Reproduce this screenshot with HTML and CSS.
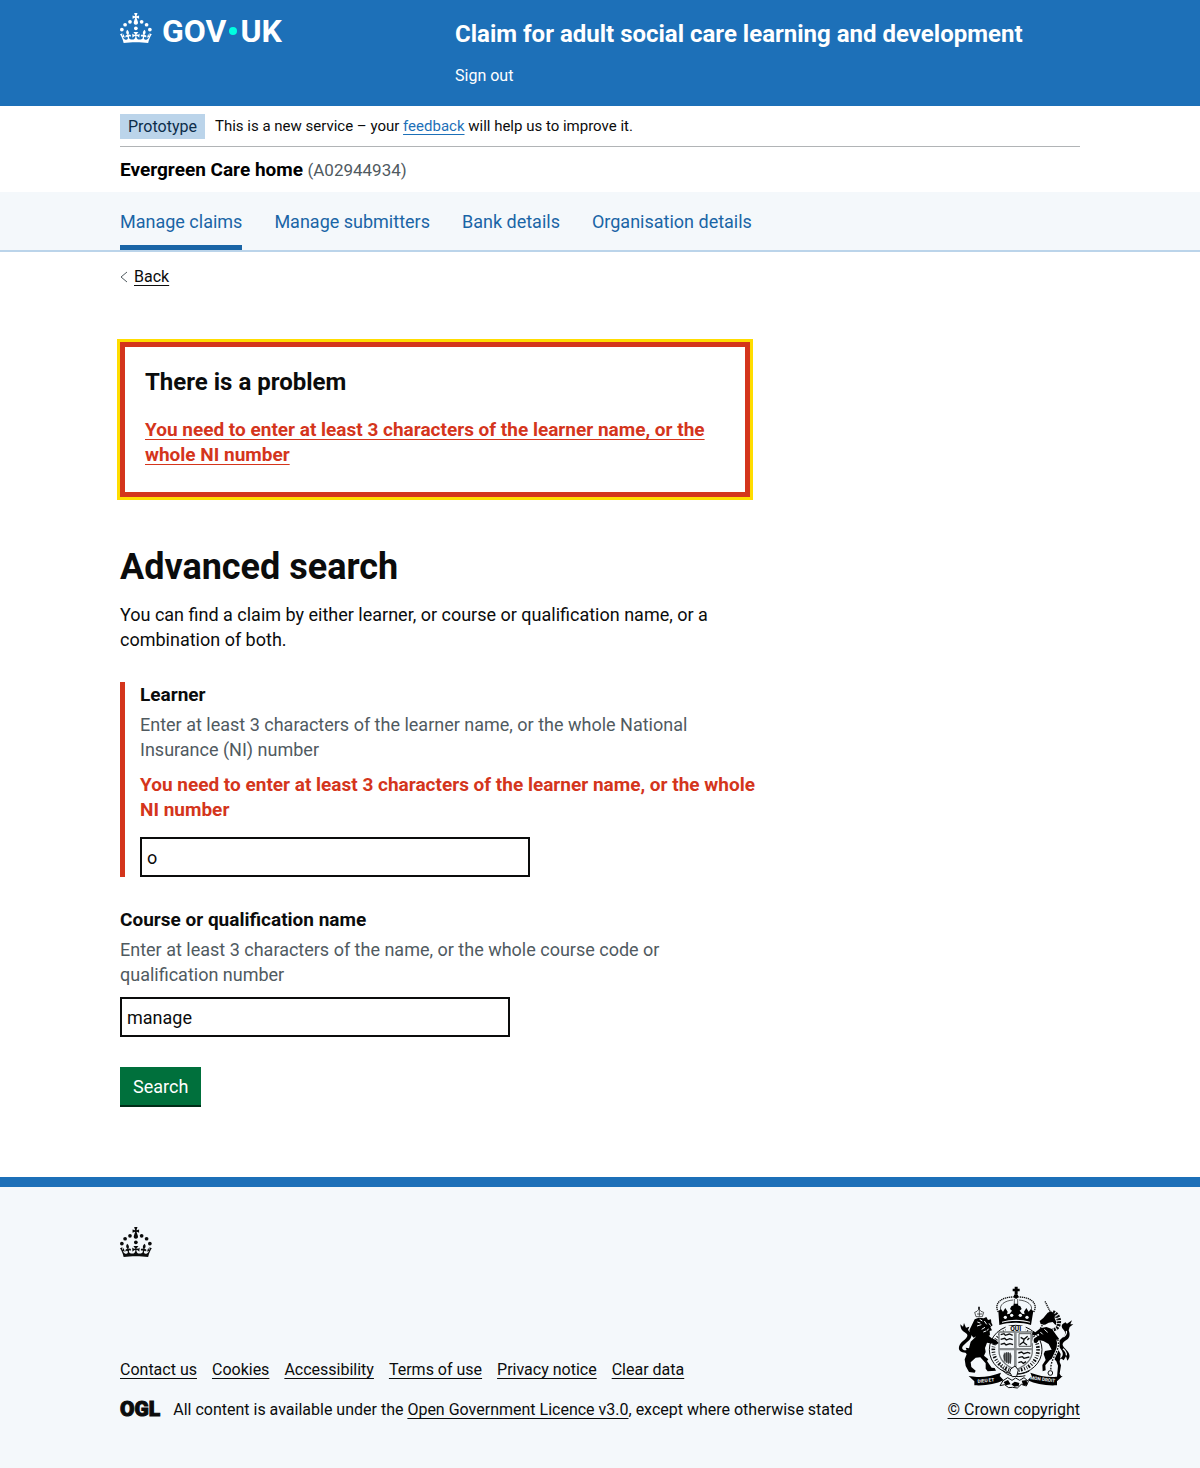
FILE: index.html
```html
<!DOCTYPE html>
<html lang="en">
<head>
<meta charset="utf-8">
<meta name="viewport" content="width=device-width, initial-scale=1">
<title>Advanced search – Claim for adult social care learning and development</title>
<link rel="stylesheet" href="styles.css">
</head>
<body>
<svg class="symbols" aria-hidden="true">
  <symbol id="crown" viewBox="0 0 64 60">
    <circle cx="20" cy="17.6" r="3.7"/><circle cx="10.2" cy="23.5" r="3.7"/><circle cx="3.7" cy="33.2" r="3.7"/><circle cx="31.7" cy="30.6" r="3.7"/><circle cx="43.3" cy="17.6" r="3.7"/><circle cx="53.2" cy="23.5" r="3.7"/><circle cx="59.7" cy="33.2" r="3.7"/>
    <path d="M33.1,9.8c.2-.1.3-.3.5-.5l4.6,2.4v-6.8l-4.6,1.5c-.1-.2-.3-.3-.5-.5l1.9-5.9h-6.7l1.9,5.9c-.2.1-.3.3-.5.5l-4.6-1.5v6.8l4.6-2.4c.1.2.3.3.5.5l-2.6,8c-.9,2.8,1.2,5.7,4.1,5.7h0c3,0,5.1-2.9,4.1-5.7l-2.6-8ZM37,37.9s-3.4,3.8-4.1,6.1c2.2,0,4.2-.5,6.4-2.8l-.7,8.5c-2-2.8-4.4-4.1-5.7-3.8.1,3.1.5,6.7,5.8,7.2,3.7.3,6.7-1.5,7-3.8.4-2.6-2-4.3-3.7-1.6-1.4-4.5,2.4-6.1,4.9-3.2-1.9-4.5-1.8-7.7,2.4-10.9,3,4,2.6,7.3-1.2,11.1,2.4-1.3,6.2,0,4,4.6-1.2-2.8-3.7-2.2-4.2.2-.3,1.7.7,3.7,3,4.2,1.9.3,4.7-.9,7-5.9-1.3,0-2.4.7-3.9,1.7l2.4-8c.6,2.3,1.4,3.7,2.2,4.5.6-1.6.5-2.8,0-5.3l5,1.8c-2.6,3.6-5.2,8.7-7.3,17.5-7.4-1.1-15.7-1.7-24.5-1.7h0c-8.8,0-17.1.6-24.5,1.7-2.1-8.9-4.7-13.9-7.3-17.5l5-1.8c-.5,2.5-.6,3.7,0,5.3.8-.8,1.6-2.3,2.2-4.5l2.4,8c-1.5-1-2.6-1.7-3.9-1.7,2.3,5,5.2,6.2,7,5.9,2.3-.4,3.3-2.4,3-4.2-.5-2.4-3-3.1-4.2-.2-2.2-4.6,1.6-6,4-4.6-3.7-3.7-4.2-7.1-1.2-11.1,4.2,3.2,4.3,6.4,2.4,10.9,2.5-2.8,6.3-1.3,4.9,3.2-1.8-2.7-4.1-1-3.7,1.6.3,2.3,3.3,4.1,7,3.8,5.4-.5,5.7-4.2,5.8-7.2-1.3-.2-3.7,1-5.7,3.8l-.7-8.5c2.2,2.3,4.2,2.7,6.4,2.8-.7-2.3-4.1-6.1-4.1-6.1h10.6Z"/>
  </symbol>
</svg>

<header class="header">
  <div class="container header-grid">
    <a class="logo" href="#" aria-label="GOV.UK">
      <svg class="crown" aria-hidden="true"><use href="#crown"/></svg>
      <span class="logo-text">GOV</span><span class="logo-dot"></span><span class="logo-text">UK</span>
    </a>
    <div class="header-content">
      <a class="service-name" href="#">Claim for adult social care learning and development</a>
      <a class="sign-out" href="#">Sign out</a>
    </div>
  </div>
</header>

<div class="container">
  <div class="phase-banner">
    <strong class="tag">Prototype</strong>
    <span class="phase-text">This is a new service – your <a class="link" href="#">feedback</a> will help us to improve it.</span>
  </div>
  <p class="organisation"><strong>Evergreen Care home</strong> <span>(A02944934)</span></p>
</div>

<nav class="service-nav" aria-label="Service">
  <ul class="container nav-list">
    <li><a class="nav-link current" href="#" aria-current="page">Manage claims</a></li>
    <li><a class="nav-link" href="#">Manage submitters</a></li>
    <li><a class="nav-link" href="#">Bank details</a></li>
    <li><a class="nav-link" href="#">Organisation details</a></li>
  </ul>
</nav>

<div class="container">
  <a class="back-link" href="#">
    <svg class="chevron" viewBox="0 0 8 12" aria-hidden="true"><path d="M7 1 1 6l6 5" fill="none" stroke="#505a5f"/></svg>
    <span>Back</span>
  </a>
  <main class="main">
    <div class="error-summary" role="alert">
      <h2>There is a problem</h2>
      <ul>
        <li><a href="#learner">You need to enter at least 3 characters of the learner name, or the whole NI number</a></li>
      </ul>
    </div>
    <h1>Advanced search</h1>
    <p class="lead">You can find a claim by either learner, or course or qualification name, or a combination of both.</p>
    <form>
      <div class="form-group form-group-error">
        <label for="learner">Learner</label>
        <p class="hint" id="learner-hint">Enter at least 3 characters of the learner name, or the whole National Insurance (NI) number</p>
        <p class="error-message" id="learner-error">You need to enter at least 3 characters of the learner name, or the whole NI number</p>
        <input class="input" id="learner" name="learner" type="text" value="o" aria-describedby="learner-hint learner-error">
      </div>
      <div class="form-group">
        <label for="course">Course or qualification name</label>
        <p class="hint" id="course-hint">Enter at least 3 characters of the name, or the whole course code or qualification number</p>
        <input class="input" id="course" name="course" type="text" value="manage" aria-describedby="course-hint">
      </div>
      <button class="button" type="submit">Search</button>
    </form>
  </main>
</div>

<footer class="footer">
  <div class="container">
    <svg class="crown" aria-hidden="true"><use href="#crown"/></svg>
    <div class="footer-meta">
      <div class="footer-main">
        <ul class="footer-links">
          <li><a href="#">Contact us</a></li>
          <li><a href="#">Cookies</a></li>
          <li><a href="#">Accessibility</a></li>
          <li><a href="#">Terms of use</a></li>
          <li><a href="#">Privacy notice</a></li>
          <li><a href="#">Clear data</a></li>
        </ul>
        <div class="licence">
          <span class="ogl" aria-hidden="true">OGL</span>
          <span>All content is available under the <a href="#">Open Government Licence v3.0</a>, except where otherwise stated</span>
        </div>
      </div>
      <a class="copyright" href="#">
        <svg class="arms" viewBox="50 30 351 309" aria-hidden="true">
          <!-- royal crown -->
          <path d="M223 32h9v6h6v8h-6v8h-9v-8h-6v-8h6z"/>
          <circle cx="227" cy="61" r="7"/>
          <g fill="none" stroke="#0b0c0c">
            <path d="M174 108c-16-28 14-46 46-45M280 108c16-28-14-46-46-45" stroke-width="4" stroke-dasharray="4 2"/>
            <path d="M182 106c-8-20 12-32 36-34M272 106c8-20-12-32-36-34" stroke-width="2"/>
            <path d="M222 70v24M232 70v24" stroke-width="3" stroke-dasharray="4 2"/>
          </g>
          <path d="M174 105l8-5 6 7 7-11 7 11-2 8 8-2 7-9-6-5 4-8 7-3v-5h13v5l7 3 4 8-6 5 7 9 8 2-2-8 7-11 7 11 6-7 8 5-7 42c-28-9-67-9-95 0z"/>
          <g fill="#f4f8fb"><circle cx="195" cy="124" r="5"/><circle cx="214" cy="118" r="5"/><circle cx="240" cy="118" r="5"/><circle cx="260" cy="124" r="5"/><path d="M185 137c24-8 60-8 84 0v3c-26-7-60-7-84 0z"/></g>
          <!-- garter -->
          <ellipse cx="226" cy="221" rx="79" ry="73" fill="#f4f8fb" stroke="#0b0c0c" stroke-width="3"/>
          <ellipse cx="226" cy="221" rx="67" ry="62" fill="none" stroke="#0b0c0c" stroke-width="11" stroke-dasharray="3 5 5 4 2 5"/>
          <path d="M196 150h60v18h-60z" fill="#f4f8fb"/>
          <text x="226" y="166" text-anchor="middle" class="arms-text">QUI</text>
          <!-- quartered shield -->
          <path d="M176 168h100v57c0 28-22 45-50 57-28-12-50-29-50-57z" fill="#f4f8fb" stroke="#75797b" stroke-width="4"/>
          <path d="M221 168h8v110h-8zM176 216h100v7H176z" fill="#8b8f91"/>
          <g fill="none" stroke="#0b0c0c" stroke-width="4">
            <path d="M181 176l10-3 4 5 12-4 10 4M181 190l12-3 5 5 10-4 9 3M181 205l11-3 5 5 12-4 9 3"/>
            <path d="M234 231l10-3 6 5 12-4 8 3M234 245l12-3 5 5 16-4M234 260l9-3 6 5 8-5"/>
            <path d="M241 184l10 6 11-9M252 188l-3 11 11 8M249 198l-11 8M261 192l6-6"/>
            <path d="M236 173h36v38h-36z" stroke-width="2"/>
          </g>
          <path d="M188 238c5-12 24-12 26 2l-2 20c-16 5-23-8-24-22z" fill="#75797b"/>
          <path d="M192 230v27M198 228v33M204 228v36M210 230v34" stroke="#0b0c0c" stroke-width="2"/>
          <!-- lion -->
          <path d="M107 122l-4-13 7-3 6-7 6 7 8 3-4 13zM110 114h16M117 101v20" fill="none" stroke="#0b0c0c" stroke-width="2"/>
          <path d="M116 92v8" stroke="#0b0c0c" stroke-width="5"/>
          <path d="M103 130l12-5 15 2 8-4 5 9 9-2 1 10 4 8-7 5 5 10-7 2 1 13-4 1 9 8 13 5 8 9-7 5-11-3-17-3-6 16 2 12-5 11 13 11-4 5 14 20 9 1 4 8-25 2-6-8 0-16-16-18-14 1-15 14 2 14 13 11-3 6-17-2-10-18-3-20 6-15-5-8 6-2-4-10 10 2 5-20 17-16-8 4-7-7-8-1 4-8-2-6z"/>
          <path d="M111 138l9 3M110 150l13-4M132 135l7 10M124 160l10-6M139 164l6-5M118 130l8 5M146 142l5 7M129 168l8-3" stroke="#f4f8fb" stroke-width="3"/>
          <path d="M79 230c-31 2-27-22-12-34 13-10 20-19 8-26-12-6-14-13-15-25l8 7 3-11 6 14 10-3-4 10c15 12 12 23 0 34-13 12-23 19-14 25 4 4 11 1 17-3"/>
          <!-- unicorn -->
          <path d="M314 76l16 32" fill="none" stroke="#0b0c0c" stroke-width="4" stroke-dasharray="4 2"/>
          <path d="M322 110l10-4 12 8-1 13 5 11-2 10-9-10-12 2-11 6-13-2-3-9 11-9z"/>
          <path d="M338 107c17 7 24 28 16 44-4 7-11 10-18 10" fill="none" stroke="#0b0c0c" stroke-width="10" stroke-dasharray="6 3"/>
          <path d="M340 116c10 7 14 21 10 33M312 141c-8 7-9 13-13 18" fill="none" stroke="#0b0c0c" stroke-width="4" stroke-dasharray="5 3"/>
          <path d="M285 169l15-12 18-4 17 6 10 14 11 15 2 17-5 15 8 14-3 24 4 10-4 25 6 10h-14l3-34-5-13-9-9-10 4-14 17 1 15-9 3-1-19 10-15-6-18 4-9 20-4-9-17-16-9-13-3-8 10-8-3 2-12 15-9-2-5-13 6-7-4 4-10z"/>
          <path d="M280 184l-4 16 8 6M312 160l10 9M300 168l7 7" fill="none" stroke="#f4f8fb" stroke-width="3"/>
          <path d="M354 252c16-9 17-21 7-33-9-12-8-24 5-34 16-12 6-21 0-28-4-8-1-14 7-16l1-3 6 5 15-10-5 12 9 0-11 8-3 10c6 14 2 25-8 30-13 8-13 15-2 25 14 14 17 24 6 36l-4-13-7 12-6-5z"/>
          <path d="M378 165c2 8-2 13-9 18M368 218c8 7 11 14 10 20" fill="none" stroke="#f4f8fb" stroke-width="4"/>
          <path d="M352 190c12 34-25 56-20 94" fill="none" stroke="#f4f8fb" stroke-width="8"/>
          <path d="M352 190c12 34-25 56-20 94" fill="none" stroke="#0b0c0c" stroke-width="4" stroke-dasharray="5 4"/>
          <circle cx="330" cy="291" r="7" fill="none" stroke="#0b0c0c" stroke-width="3"/>
          <!-- motto scroll -->
          <path d="M178 267c20 26 55 36 89 18M185 281c16 21 45 24 70 18" fill="none" stroke="#0b0c0c" stroke-width="3"/>
          <path d="M211 279l13-9 10 12-5 19-13 1-8-13z" fill="#f4f8fb" stroke="#0b0c0c" stroke-width="3"/>
          <path d="M85 300l25 3c25 1 47-4 72-13l-4 10 12 13c-24 11-54 17-88 15l0-12zM367 300l-25 3c-25 1-47-4-72-13l4 10-12 13c24 11 54 17 88 15l0-12z"/>
          <text x="112" y="321" transform="rotate(-6 112 321)" class="motto">DIEU ET</text>
          <text x="269" y="310" transform="rotate(7 269 310)" class="motto">MON DROIT</text>
          <path d="M188 314l14-9 13 8 11-7 12 7 13-8 13 11-6 14-15-5-12 11-15-2-11 1-12-9-14 3z" fill="#f4f8fb" stroke="#0b0c0c" stroke-width="3"/>
          <path d="M190 318l13-6 8 13-15 3zM244 314l15-2 2 14-13 2zM213 325l10-8 14 4-2 9-13 2z"/>
        </svg>
        <span>© Crown copyright</span>
      </a>
    </div>
  </div>
</footer>
</body>
</html>
```
FILE: styles.css
```css
*, *::before, *::after { box-sizing: border-box; }

body {
  margin: 0;
  color: #0b0c0c;
  background: #fff;
  font-family: Roboto, "Liberation Sans", sans-serif;
  font-size: 18px;
  line-height: 25px;
}

h1, h2, p, ul { margin: 0; padding: 0; }
ul { list-style: none; }
a { color: inherit; text-decoration-thickness: 1px; text-underline-offset: 3px; }

.symbols { display: none; }
.container { max-width: 960px; margin: 0 auto; }
.crown { display: block; width: 32px; height: 30px; fill: currentColor; }

.header { background: #1d70b8; color: #fff; }
.header-grid { display: grid; grid-template-columns: 1fr 625px; padding: 13px 0 18px; }
.header a { text-decoration: none; }
.logo { display: flex; align-items: center; height: 30px; }
.logo-text { font-size: 32px; font-weight: 700; line-height: 30px; padding-top: 6px; }
.logo .crown { margin-right: 10px; }
.logo-dot { width: 8px; height: 8px; margin: 6px 3px 0; border-radius: 50%; background: #00ffe0; }
.header-content { display: flex; flex-direction: column; align-items: flex-start; gap: 14px; padding-top: 6px; }
.service-name { font-size: 24px; font-weight: 700; line-height: 30px; }
.sign-out { font-size: 16px; }

.phase-banner { display: flex; align-items: center; gap: 10px; padding: 8px 0 7px; border-bottom: 1px solid #b1b4b6; font-size: 16px; }
.tag { padding: 0 8px; background: #bbd4ea; color: #0c2d4a; font-weight: 400; }
.phase-text { font-size: 15px; }
.link { color: #1d70b8; }
.organisation { padding: 10px 0 9px; }
.organisation strong { color: #000; font-size: 19px; }
.organisation span { color: #505a5f; font-size: 17px; }

.service-nav { background: #f4f8fb; border-bottom: 2px solid #bbd4ea; }
.nav-list { display: flex; gap: 32px; }
.nav-link { display: block; padding: 17px 0 11px; border-bottom: 5px solid transparent; color: #1a65a6; text-decoration: none; }
.nav-link.current { border-color: #1a65a6; }

.back-link { display: inline-flex; align-items: center; gap: 6px; margin-top: 12px; font-size: 16px; text-decoration: none; }
.back-link span { text-decoration: underline; text-decoration-thickness: 1px; text-underline-offset: 3px; }
.chevron { width: 8px; height: 12px; }

.main { max-width: 640px; padding: 53px 0 70px; }
.error-summary { max-width: 630px; margin-bottom: 50px; padding: 20px; border: 5px solid #d4351c; outline: 3px solid #fd0; }
.error-summary h2 { margin-bottom: 20px; font-size: 24px; line-height: 30px; }
.error-summary li { margin-bottom: 5px; color: #d4351c; font-size: 19px; font-weight: 700; }
h1 { margin-bottom: 15px; font-size: 36px; line-height: 40px; }
.lead { margin-bottom: 30px; }

.form-group { margin-bottom: 30px; }
.form-group-error { padding-left: 15px; border-left: 5px solid #d4351c; }
label { display: block; margin-bottom: 5px; font-size: 19px; font-weight: 700; }
.hint { max-width: 600px; margin-bottom: 10px; color: #505a5f; }
.error-message { margin-bottom: 15px; color: #d4351c; font-size: 19px; font-weight: 700; }
.input { display: block; width: 100%; max-width: 390px; height: 40px; padding: 5px; border: 2px solid #0b0c0c; border-radius: 0; background: #fff; color: inherit; font: inherit; }
.button { display: block; margin-bottom: 2px; padding: 7px 13px 6px; border: 0; box-shadow: 0 2px 0 #002d18; background: #00703c; color: #fff; font: inherit; }

.footer { padding: 40px 0 47px; border-top: 10px solid #1d70b8; background: #f4f8fb; font-size: 16px; }
.footer-meta { display: flex; align-items: flex-end; justify-content: space-between; margin-top: 29px; }
.footer-links { display: flex; gap: 15px; margin-bottom: 15px; }
.licence { display: flex; align-items: center; gap: 13px; }
.ogl { font-size: 21px; font-weight: 900; -webkit-text-stroke: 1px currentColor; }
.copyright { display: flex; flex-direction: column; align-items: flex-end; gap: 8px; text-decoration: none; }
.copyright span { text-decoration: underline; text-decoration-thickness: 1px; text-underline-offset: 3px; }
.arms { width: 117px; height: 103px; margin-right: 6px; }
.arms-text { font-size: 20px; font-weight: 700; }
.motto { font-size: 14px; font-weight: 700; fill: #f4f8fb; }
```
